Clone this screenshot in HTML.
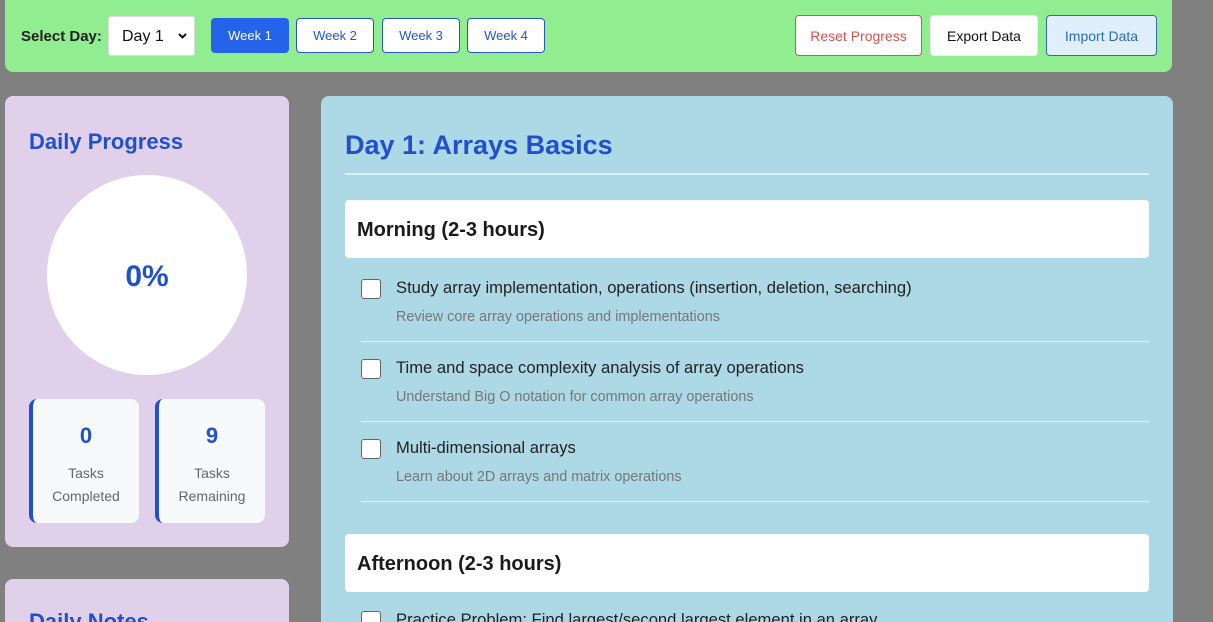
<!DOCTYPE html>
<html style="width:1213px;height:622px;overflow:hidden"><head><meta charset="utf-8"><style>
*{margin:0;padding:0;box-sizing:border-box}
body{width:1213px;height:622px;overflow:hidden;background:#808080;font-family:"Liberation Sans",sans-serif;position:relative}
.a{position:absolute}
.bar{left:5px;top:0;width:1167px;height:72px;background:#90ee90;border-radius:0 0 8px 8px}
.btn{position:absolute;height:35px;border-radius:4px;font-size:13px;display:flex;align-items:center;justify-content:center;background:#fff}
.wk{border:1px solid #2555c9;color:#2555c9;top:18px;width:78px}
.card{background:#e1d0ea;border-radius:8px 8px 0 0}
.blue{color:#2150cf}
.cb{position:absolute;left:361px;width:20px;height:20px;border:1px solid #666;border-radius:3px;background:#fff}
.it{position:absolute;left:396px;font-size:16.6px;color:#222}
.sub{position:absolute;left:396px;font-size:14.4px;color:#777}
.hr{position:absolute;left:361px;width:788px;height:1px;background:#e5eef2}
.sec{position:absolute;left:345px;width:804px;height:58px;background:#fff;border-radius:4px;font-weight:bold;font-size:20px;color:#1a1a1a;padding:19px 0 0 12px}
.stat{position:absolute;top:399px;width:110px;height:124px;background:#f8f9fb;border-radius:8px;border-left:4px solid #2150cf;text-align:center}
.stat b{display:block;font-size:22px;color:#2150cf;margin-top:24px}
.stat span{display:block;font-size:14px;color:#666;line-height:23px;margin-top:13px}
</style></head><body>
<div class="a bar"></div>
<div class="a" style="left:21px;top:28px;font-size:15px;font-weight:bold;color:#222">Select Day:</div>
<div class="a" style="left:108px;top:16px;width:87px;height:40px;background:#fff;border-radius:3px;border:1px solid #ddd;font-size:16px;padding:11px 0 0 13px;color:#111">Day 1<svg style="position:absolute;right:7px;top:16px" width="9" height="6" viewBox="0 0 9 6"><path d="M1 1l3.5 3.5L8 1" stroke="#111" stroke-width="2" fill="none"/></svg></div>
<div class="btn" style="left:211px;top:18px;width:78px;background:#2563eb;color:#fff">Week 1</div>
<div class="btn wk" style="left:296px">Week 2</div>
<div class="btn wk" style="left:382px">Week 3</div>
<div class="btn wk" style="left:467px">Week 4</div>
<div class="btn" style="left:795px;top:15px;width:127px;height:41px;border:1px solid #d9534f;color:#d9534f;font-size:14px">Reset Progress</div>
<div class="btn" style="left:930px;top:15px;width:108px;height:41px;border:1px solid #eee;color:#111;font-size:14px">Export Data</div>
<div class="btn" style="left:1046px;top:15px;width:111px;height:41px;border:1px solid #2a6bc4;background:#e1effd;color:#2a6bc4;font-size:14px">Import Data</div>

<div class="a card" style="left:5px;top:96px;width:284px;height:451px;border-radius:8px"></div>
<div class="a blue" style="left:29px;top:129px;font-size:22px;font-weight:bold">Daily Progress</div>
<div class="a" style="left:47px;top:175px;width:200px;height:200px;border-radius:50%;background:#fff"></div>
<div class="a blue" style="left:47px;top:260px;width:200px;text-align:center;font-size:30px;font-weight:bold">0%</div>
<div class="stat" style="left:29px"><b>0</b><span>Tasks<br>Completed</span></div>
<div class="stat" style="left:155px"><b>9</b><span>Tasks<br>Remaining</span></div>
<div class="a card" style="left:5px;top:579px;width:284px;height:43px;overflow:hidden"><div class="a blue" style="left:24px;top:30px;font-size:22px;font-weight:bold">Daily Notes</div></div>

<div class="a" style="left:321px;top:96px;width:852px;height:526px;background:#add8e6;border-radius:8px 8px 0 0;overflow:hidden">
<div class="cb" style="top:515px;left:40px"></div>
<div class="it" style="top:514px;left:75px;white-space:nowrap">Practice Problem: Find largest/second largest element in an array</div>
</div>
<div class="a blue" style="left:345px;top:130px;font-size:27px;font-weight:bold">Day 1: Arrays Basics</div>
<div class="a" style="left:345px;top:173px;width:804px;height:2px;background:#e3eef2"></div>
<div class="sec" style="top:200px">Morning (2-3 hours)</div>
<div class="cb" style="top:279px"></div>
<div class="it" style="top:278px">Study array implementation, operations (insertion, deletion, searching)</div>
<div class="sub" style="top:309px">Review core array operations and implementations</div>
<div class="hr" style="top:341px"></div>
<div class="cb" style="top:359px"></div>
<div class="it" style="top:358px">Time and space complexity analysis of array operations</div>
<div class="sub" style="top:389px">Understand Big O notation for common array operations</div>
<div class="hr" style="top:421px"></div>
<div class="cb" style="top:439px"></div>
<div class="it" style="top:438px">Multi-dimensional arrays</div>
<div class="sub" style="top:469px">Learn about 2D arrays and matrix operations</div>
<div class="hr" style="top:501px"></div>
<div class="sec" style="top:534px">Afternoon (2-3 hours)</div>
</body></html>
